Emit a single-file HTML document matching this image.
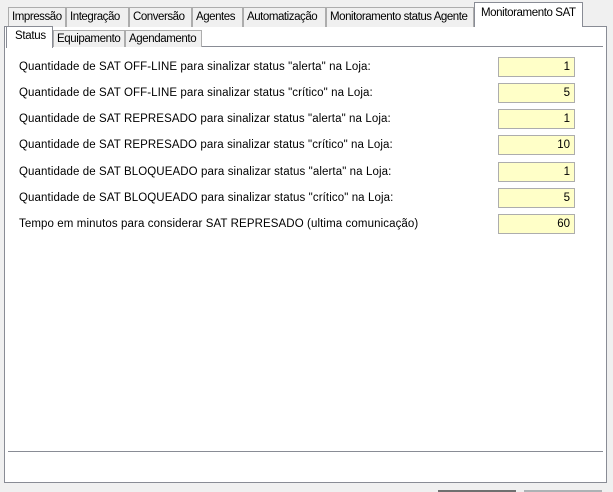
<!DOCTYPE html><html><head><style>
body{margin:0;width:613px;height:491px;background:#f0f0f0;position:relative;overflow:hidden;font-family:"Liberation Sans",sans-serif;font-size:11.5px;color:#000}
div{position:absolute;box-sizing:border-box}
.t{top:7px;height:20px;border:1px solid #adadad;border-bottom:none;background:#f0f0f0;padding:3px 0 0 3px;white-space:nowrap;letter-spacing:-0.45px;overflow:hidden}
.s{top:30px;height:17px;border:1px solid #adadad;border-bottom:none;background:#f0f0f0;padding:2px 0 0 3px;white-space:nowrap;letter-spacing:-0.4px;overflow:hidden}
.l{left:19px;white-space:nowrap;letter-spacing:0.1px}
.i{left:498px;width:77px;height:20px;border:1px solid #adadad;background:#ffffc8;text-align:right;padding:3px 4px 0 0}
</style></head><body>
<div style="left:4px;top:26px;width:603px;height:457px;background:#fff;border:1px solid #898c95"></div>
<div class="t" style="left:8px;width:58px">Impressão</div>
<div class="t" style="left:66px;width:63px">Integração</div>
<div class="t" style="left:129px;width:63px">Conversão</div>
<div class="t" style="left:192px;width:51px">Agentes</div>
<div class="t" style="left:243px;width:83px">Automatização</div>
<div class="t" style="left:326px;width:148px">Monitoramento status Agente</div>
<div style="left:474px;top:2px;width:109px;height:25px;background:#fff;border:1px solid #898c95;border-bottom:none;padding:4px 0 0 6px;white-space:nowrap;letter-spacing:-0.4px">Monitoramento SAT</div>
<div style="left:8px;top:46px;width:595px;height:1px;background:#898c95"></div>
<div class="s" style="left:53px;width:72px">Equipamento</div>
<div class="s" style="left:125px;width:77px">Agendamento</div>
<div style="left:6px;top:26px;width:47px;height:22px;background:#fff;border:1px solid #898c95;border-bottom:none;padding:3px 0 0 8px;letter-spacing:-0.3px">Status</div>
<div style="left:8px;top:451px;width:595px;height:1px;background:#898c95"></div>
<div class="l" style="top:61px">Quantidade de SAT OFF-LINE para sinalizar status "alerta" na Loja:</div>
<div class="l" style="top:87px">Quantidade de SAT OFF-LINE para sinalizar status "crítico" na Loja:</div>
<div class="l" style="top:113px">Quantidade de SAT REPRESADO para sinalizar status "alerta" na Loja:</div>
<div class="l" style="top:139px">Quantidade de SAT REPRESADO para sinalizar status "crítico" na Loja:</div>
<div class="l" style="top:166px">Quantidade de SAT BLOQUEADO para sinalizar status "alerta" na Loja:</div>
<div class="l" style="top:192px">Quantidade de SAT BLOQUEADO para sinalizar status "crítico" na Loja:</div>
<div class="l" style="top:218px">Tempo em minutos para considerar SAT REPRESADO (ultima comunicação)</div>
<div class="i" style="top:57px">1</div>
<div class="i" style="top:83px">5</div>
<div class="i" style="top:109px">1</div>
<div class="i" style="top:135px">10</div>
<div class="i" style="top:162px">1</div>
<div class="i" style="top:188px">5</div>
<div class="i" style="top:214px">60</div>
<div style="left:438px;top:490px;width:78px;height:2px;background:#707070"></div>
<div style="left:524px;top:490px;width:78px;height:2px;background:#adb2b5"></div>
</body></html>
